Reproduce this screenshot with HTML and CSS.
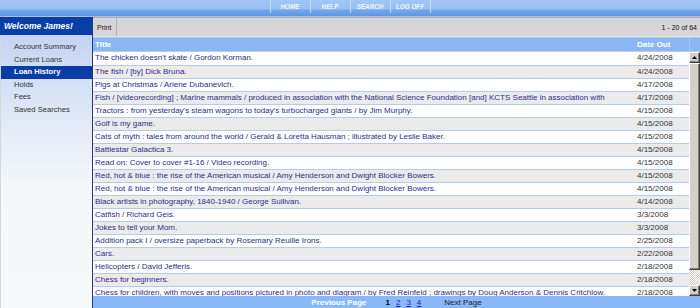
FILE: index.html
```html
<!DOCTYPE html>
<html lang="en">
<head>
    <meta charset="UTF-8">
    <meta name="viewport" content="width=device-width, initial-scale=1.0">
    <title>Loan History</title>
    <link rel="stylesheet" href="styles.css">
</head>
<body>
    <div class="topbar">
        <ul class="nav">
            <li><a href="#">HOME</a></li>
            <li><a href="#">HELP</a></li>
            <li><a href="#">SEARCH</a></li>
            <li><a href="#">LOG OFF</a></li>
        </ul>
    </div>
    <div class="page">
        <div class="sidebar">
            <div class="welcome">Welcome James!</div>
            <ul class="menu">
                <li><a href="#">Account Summary</a></li>
                <li><a href="#">Current Loans</a></li>
                <li class="active"><a href="#">Loan History</a></li>
                <li><a href="#">Holds</a></li>
                <li><a href="#">Fees</a></li>
                <li><a href="#">Saved Searches</a></li>
            </ul>
        </div>
        <div class="main">
            <div class="toolbar">
                <button class="print">Print</button>
                <span class="count">1 - 20 of 64</span>
            </div>
            <div class="grid-head">
                <span class="col-title">Title</span>
                <span class="col-date">Date Out</span>
                <span class="col-bar"></span>
            </div>
            <div class="grid-body">
                <div class="rows">
                    <table>
                        <colgroup><col class="c-title"><col class="c-date"></colgroup>
                        <tbody>
                            <tr><td>The chicken doesn't skate / Gordon Korman.</td><td class="date">4/24/2008</td></tr>
                            <tr><td>The fish / [by] Dick Bruna.</td><td class="date">4/24/2008</td></tr>
                            <tr><td>Pigs at Christmas / Arlene Dubanevich.</td><td class="date">4/17/2008</td></tr>
                            <tr><td>Fish / [videorecording] ; Marine mammals / produced in association with the National Science Foundation [and] KCTS Seattle in association with</td><td class="date">4/17/2008</td></tr>
                            <tr><td>Tractors : from yesterday's steam wagons to today's turbocharged giants / by Jim Murphy.</td><td class="date">4/15/2008</td></tr>
                            <tr><td>Golf is my game.</td><td class="date">4/15/2008</td></tr>
                            <tr><td>Cats of myth : tales from around the world / Gerald &amp; Loretta Hausman ; illustrated by Leslie Baker.</td><td class="date">4/15/2008</td></tr>
                            <tr><td>Battlestar Galactica 3.</td><td class="date">4/15/2008</td></tr>
                            <tr><td>Read on: Cover to cover #1-16 / Video recording.</td><td class="date">4/15/2008</td></tr>
                            <tr><td>Red, hot &amp; blue : the rise of the American musical / Amy Henderson and Dwight Blocker Bowers.</td><td class="date">4/15/2008</td></tr>
                            <tr><td>Red, hot &amp; blue : the rise of the American musical / Amy Henderson and Dwight Blocker Bowers.</td><td class="date">4/15/2008</td></tr>
                            <tr><td>Black artists in photography, 1840-1940 / George Sullivan.</td><td class="date">4/14/2008</td></tr>
                            <tr><td>Catfish / Richard Geis.</td><td class="date">3/3/2008</td></tr>
                            <tr><td>Jokes to tell your Mom.</td><td class="date">3/3/2008</td></tr>
                            <tr><td>Addition pack I / oversize paperback by Rosemary Reuille Irons.</td><td class="date">2/25/2008</td></tr>
                            <tr><td>Cars.</td><td class="date">2/22/2008</td></tr>
                            <tr><td>Helicopters / David Jefferis.</td><td class="date">2/18/2008</td></tr>
                            <tr><td>Chess for beginners.</td><td class="date">2/18/2008</td></tr>
                            <tr><td>Chess for children, with moves and positions pictured in photo and diagram / by Fred Reinfeld ; drawings by Doug Anderson &amp; Dennis Critchlow.</td><td class="date">2/18/2008</td></tr>
                            <tr><td>Checkers / John Chaneski.</td><td class="date">2/18/2008</td></tr>
                        </tbody>
                    </table>
                </div>
                <div class="scrollbar">
                    <span class="sb-btn"><svg width="5" height="3" viewBox="0 0 5 3"><polygon points="2.5,0 5,3 0,3" fill="#000"/></svg></span>
                    <span class="sb-thumb"></span>
                    <span class="sb-track"></span>
                    <span class="sb-btn"><svg width="5" height="3" viewBox="0 0 5 3"><polygon points="0,0 5,0 2.5,3" fill="#000"/></svg></span>
                </div>
            </div>
            <div class="pager">
                <span class="prev">Previous Page</span>
                <span class="pages"><b>1</b><a href="#">2</a><a href="#">3</a><a href="#">4</a></span>
                <a class="next" href="#">Next Page</a>
            </div>
        </div>
    </div>
</body>
</html>
```

FILE: styles.css
```css
* {
    box-sizing: border-box;
}
html, body {
    margin: 0;
}
body {
    font-family: "Liberation Sans", Arial, sans-serif;
    background: #f6f9f9;
    width: 700px;
    height: 308px;
    overflow: hidden;
    display: flex;
    flex-direction: column;
}
.topbar {
    height: 17px;
    flex: none;
    border-bottom: 1px solid #b4bfd6;
    background: linear-gradient(#a2c6f4 0, #96bff2 56%, #72a6ec 66%, #5e97e6 100%);
    display: flex;
    justify-content: center;
}
.nav {
    list-style: none;
    margin: 0;
    padding: 0;
    display: flex;
    height: 13px;
    border-right: 1px solid #c4daf6;
}
.nav li {
    width: 40px;
    border-left: 1px solid #c4daf6;
    display: flex;
    align-items: center;
    justify-content: center;
}
.nav a {
    color: #f2f6ff;
    font-size: 6.3px;
    font-weight: bold;
    font-style: italic;
    text-decoration: none;
}
.page {
    flex: 1;
    display: flex;
    min-height: 0;
}
.sidebar {
    width: 92px;
    flex: none;
    display: flex;
    flex-direction: column;
}
.welcome {
    height: 18px;
    background: #0a3ea6;
    color: #fff;
    font-weight: bold;
    font-style: italic;
    font-size: 8.5px;
    line-height: 18px;
    padding-left: 4px;
}
.menu {
    flex: 1;
    list-style: none;
    margin: 0;
    padding: 6px 0 0;
    border-left: 1px solid #d6d8dc;
    background: linear-gradient(#c4d5f2 0, #d8e3f5 60px, #e6edf7 100px, #f3f7f9 150px, #f6f9f9 100%);
}
.menu a {
    display: block;
    height: 12.5px;
    line-height: 12.5px;
    padding-left: 13px;
    font-size: 7.6px;
    color: #333;
    text-decoration: none;
}
.menu .active a {
    background: #0a3ea6;
    color: #fff;
    font-weight: bold;
}
.main {
    flex: 1;
    min-width: 0;
    display: flex;
    flex-direction: column;
    border-left: 1px solid #24368e;
}
.toolbar {
    height: 20px;
    flex: none;
    border-top: 1px solid #a4acc4;
    border-bottom: 1px solid #e4e4e4;
    background: #d6d6d6;
    display: flex;
    align-items: center;
    justify-content: space-between;
}
.print {
    height: 18px;
    padding: 0 5px 0 4px;
    border: 0;
    border-right: 1px solid #b4b4b4;
    background: transparent;
    font-family: inherit;
    font-size: 7px;
    color: #111;
}
.count {
    font-size: 7px;
    color: #111;
    padding-right: 3px;
}
.grid-head {
    height: 15px;
    flex: none;
    display: flex;
    background: #8ab6f2;
    border-top: 1px solid #a8c8f4;
    border-bottom: 1px solid #b6caec;
    color: #fff;
    font-size: 8px;
    font-weight: bold;
    line-height: 13px;
}
.col-title {
    width: 540px;
    padding-left: 2px;
}
.col-date {
    width: 56px;
    padding-left: 4px;
}
.col-bar {
    flex: 1;
    border-left: 1px solid #a8c8f4;
}
.grid-body {
    flex: 1;
    min-height: 0;
    display: flex;
}
.rows {
    flex: 1;
    overflow: hidden;
}
.rows table {
    width: 596px;
    border-collapse: collapse;
    table-layout: fixed;
}
.c-title {
    width: 540px;
}
.c-date {
    width: 56px;
}
.rows td {
    height: 13px;
    padding: 0 2px;
    border-bottom: 1px solid #b6caec;
    font-size: 8px;
    line-height: 12px;
    white-space: nowrap;
    overflow: hidden;
    color: #2e2e8a;
    background: #fff;
}
.rows tr:nth-child(even) td {
    background: #ebebeb;
}
.rows td.date {
    padding-left: 4px;
    color: #333;
}
.scrollbar {
    width: 11px;
    display: flex;
    flex-direction: column;
    background: repeating-conic-gradient(#fff 0 25%, #d4d0c8 0 50%) 0 0 / 2px 2px;
}
.sb-btn, .sb-thumb {
    background: #d4d0c8;
    border: 1px solid;
    border-color: #fff #404040 #404040 #fff;
    box-shadow: inset -1px -1px #808080;
}
.sb-btn {
    height: 11px;
    display: flex;
    align-items: center;
    justify-content: center;
}
.sb-thumb {
    height: 207px;
}
.sb-track {
    flex: 1;
}
.pager {
    height: 12px;
    flex: none;
    background: #88b8f8;
    display: flex;
    justify-content: center;
    align-items: center;
    font-size: 8px;
}
.prev {
    color: #fff;
    font-weight: bold;
    margin-right: 19px;
}
.pages b {
    color: #000;
}
.pages a {
    color: #1c1cc8;
    margin-left: 6px;
}
.next {
    color: #222;
    text-decoration: none;
    margin-left: 23px;
}
```
